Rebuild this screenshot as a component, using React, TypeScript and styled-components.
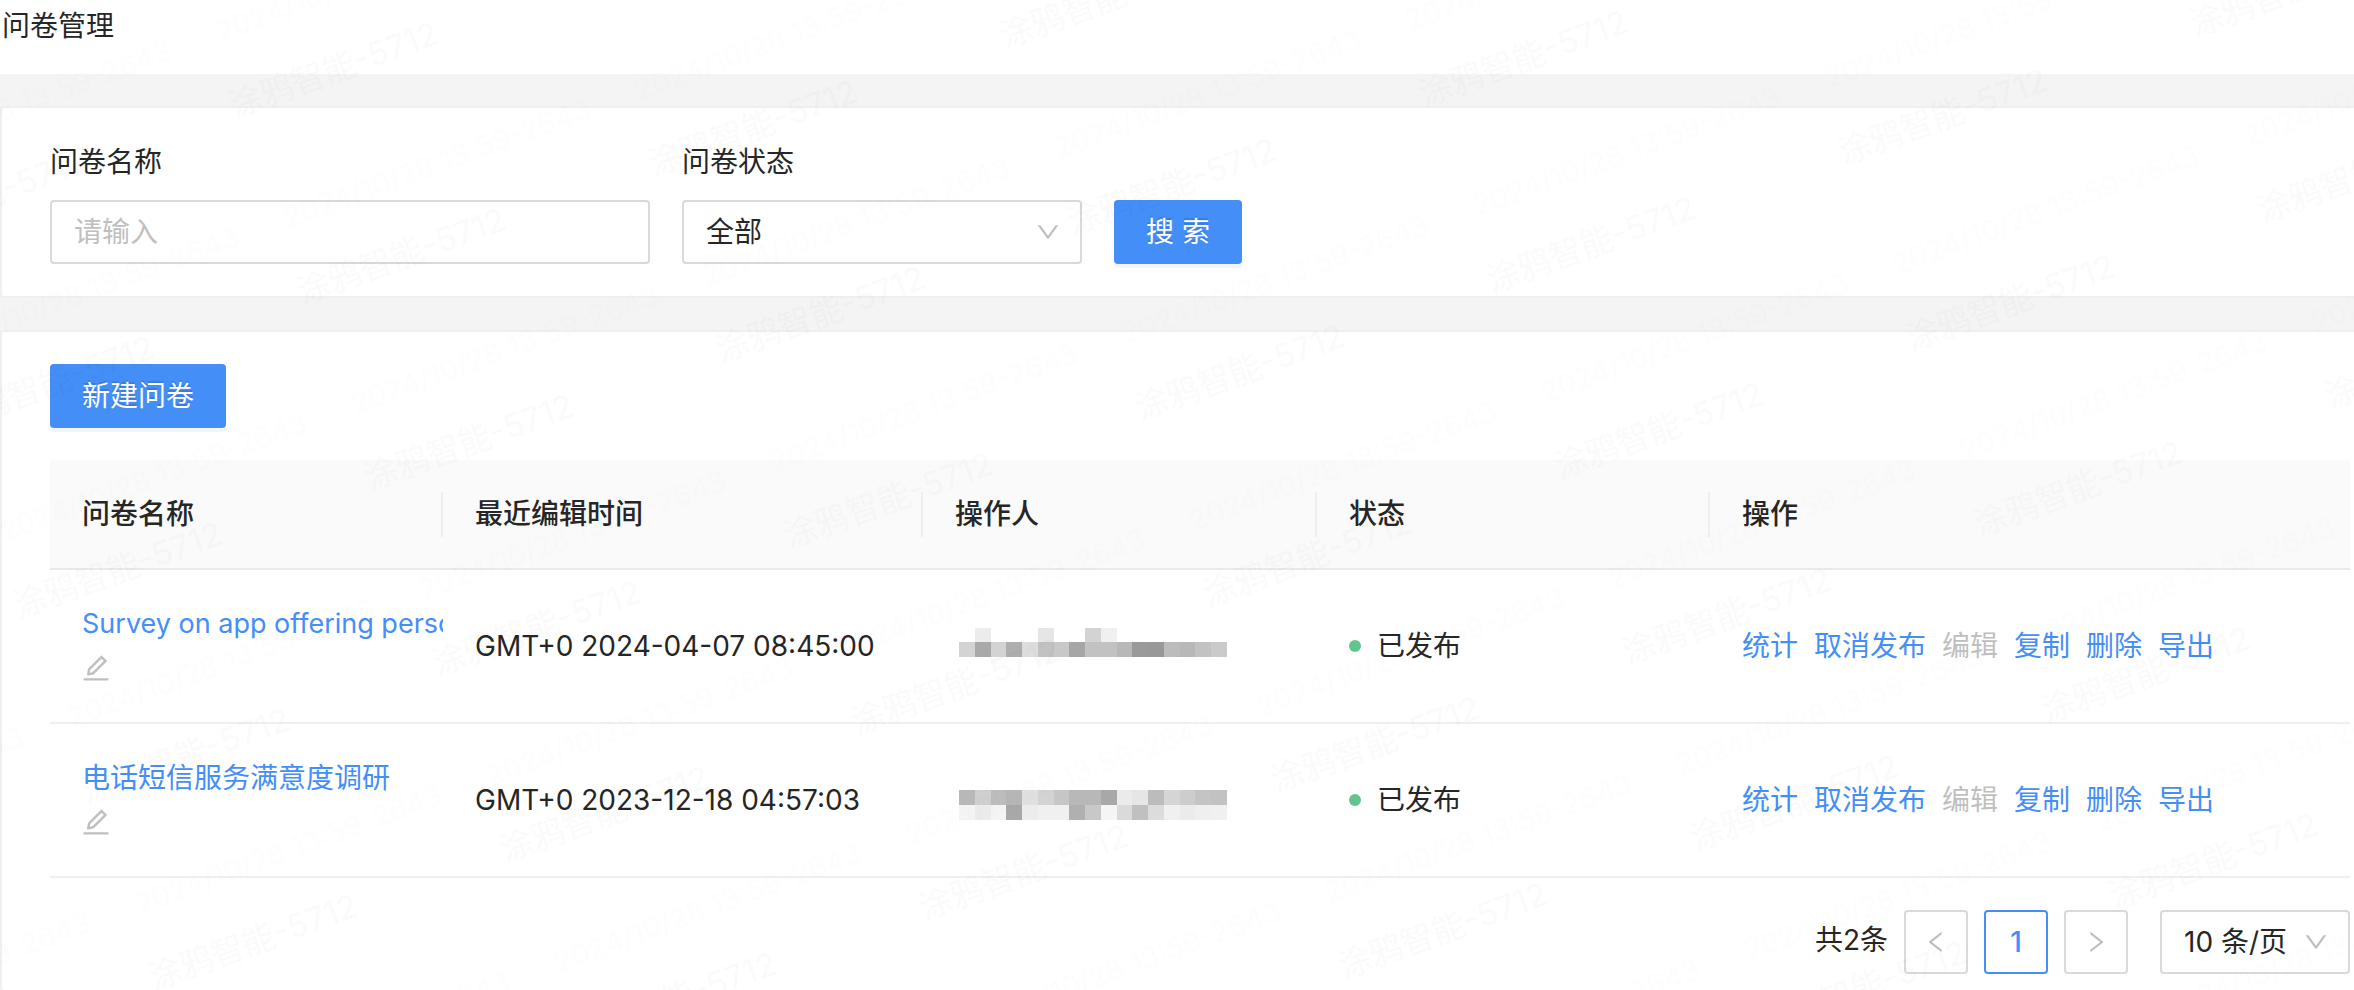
import React from 'react';
import styled, { createGlobalStyle } from 'styled-components';

const Global = createGlobalStyle`
  *, *::before, *::after { box-sizing: border-box; }
  body {
    margin: 0;
    background: #f4f4f4;
    color: #262626;
    font: 28px/44px Inter, 'Noto Sans CJK SC', sans-serif;
  }
  button, input, select { font: inherit; color: inherit; }
`;

const Page = styled.div`
  position: relative;
  overflow: hidden;
  min-height: 100vh;
  display: flex;
  flex-direction: column;
`;

const PageHeader = styled.header`
  height: 74px;
  padding: 4px 2px;
  background: #fff;
`;

const Title = styled.h1`
  margin: 0;
  font-size: 28px;
  font-weight: 400;
  line-height: 44px;
`;

const Main = styled.main`
  flex: 1;
  display: flex;
  flex-direction: column;
  gap: 32px;
  padding-top: 32px;
`;

const Card = styled.section<{ $grow?: boolean }>`
  flex: ${(p) => (p.$grow ? 1 : 'none')};
  padding: 32px 4px ${(p) => (p.$grow ? 16 : 32)}px 48px;
  background: #fff;
  border: 2px solid #efefef;
  border-right: 0;
  border-bottom-width: ${(p) => (p.$grow ? 0 : 2)}px;
  border-radius: 4px 0 0 4px;
`;

const SearchForm = styled.form`
  display: flex;
  align-items: flex-end;
  gap: 32px;
`;

const Field = styled.div<{ $width: number }>`
  display: flex;
  flex-direction: column;
  gap: 16px;
  width: ${(p) => p.$width}px;
`;

const TextInput = styled.input`
  width: 100%;
  height: 64px;
  padding: 0 22px;
  background: #fff;
  border: 2px solid #d9d9d9;
  border-radius: 4px;
  outline: none;
  &::placeholder { color: #bfbfbf; opacity: 1; }
`;

const SelectBox = styled.div`
  position: relative;
  display: flex;
`;

const SelectInput = styled.select<{ $compact?: boolean }>`
  appearance: none;
  width: ${(p) => (p.$compact ? '190px' : '100%')};
  height: 64px;
  padding: 0 22px;
  background: #fff;
  border: 2px solid #d9d9d9;
  border-radius: 4px;
  outline: none;
`;

const SelectArrow = styled.svg`
  position: absolute;
  top: 20px;
  right: 22px;
  width: 24px;
  height: 24px;
  fill: #bfbfbf;
  pointer-events: none;
`;

const PrimaryButton = styled.button`
  height: 64px;
  padding: 0 32px;
  color: #fff;
  background: #448ef7;
  border: 0;
  border-radius: 4px;
  box-shadow: 0 4px 0 rgba(0, 0, 0, 0.045);
  text-shadow: 0 -2px 0 rgba(0, 0, 0, 0.12);
  white-space: pre;
`;

const Table = styled.table`
  width: 100%;
  margin-top: 32px;
  table-layout: fixed;
  border-collapse: separate;
  border-spacing: 0;
`;

const HeadCell = styled.th`
  position: relative;
  height: 110px;
  padding: 0 32px;
  text-align: left;
  font-weight: 500;
  background: #fafafa;
  border-bottom: 2px solid #e9e9e9;
  &:first-child { border-top-left-radius: 4px; }
  &:last-child { border-top-right-radius: 4px; }
  &:not(:last-child)::after {
    content: '';
    position: absolute;
    top: 32px;
    right: 0;
    width: 2px;
    height: 45px;
    background: #efefef;
  }
`;

const Cell = styled.td<{ $flush?: boolean }>`
  height: 154px;
  padding: 0 ${(p) => (p.$flush ? 0 : 32)}px 0 32px;
  border-bottom: 2px solid #efefef;
  white-space: nowrap;
`;

const NameLink = styled.a<{ $latin?: boolean }>`
  display: block;
  overflow: hidden;
  color: #448ef7;
  font-size: ${(p) => (p.$latin ? 27 : 28)}px;
  text-decoration: none;
`;

const EditButton = styled.button`
  display: block;
  width: 28px;
  height: 44px;
  padding: 8px 0;
  background: none;
  border: 0;
  svg { display: block; width: 28px; height: 28px; fill: #bfbfbf; }
`;

const Status = styled.span`
  display: flex;
  align-items: center;
  gap: 16px;
  &::before {
    content: '';
    width: 12px;
    height: 12px;
    border-radius: 50%;
    background: #62c48f;
  }
`;

const Actions = styled.div`
  display: flex;
  gap: 16px;
`;

const Action = styled.a`
  color: #448ef7;
  text-decoration: none;
  &[aria-disabled='true'] { color: #bfbfbf; }
`;

const Mosaic = styled.svg`
  display: block;
  margin-left: 4px;
`;

const Pagination = styled.nav`
  display: flex;
  justify-content: flex-end;
  gap: 16px;
  margin-top: 32px;
`;

const Total = styled.span`
  line-height: 60px;
`;

const PageButton = styled.button<{ $active?: boolean }>`
  display: flex;
  align-items: center;
  justify-content: center;
  width: 64px;
  height: 64px;
  padding: 0;
  background: #fff;
  border: 2px solid ${(p) => (p.$active ? '#448ef7' : '#d9d9d9')};
  border-radius: 4px;
  color: ${(p) => (p.$active ? '#448ef7' : '#bfbfbf')};
  font-weight: ${(p) => (p.$active ? 500 : 400)};
  svg { width: 24px; height: 24px; fill: currentColor; }
`;

const PageSize = styled.div`
  margin-left: 16px;
`;

const Watermark = styled.svg`
  position: absolute;
  inset: 0;
  width: 100%;
  height: 100%;
  pointer-events: none;
`;

const DownIcon = () => (
  <SelectArrow viewBox="64 64 896 896" aria-hidden="true">
    <path d="M884 256h-75c-5.100 0-9.900 2.500-12.900 6.600L512 654.200 227.900 262.600c-3-4.100-7.800-6.600-12.900-6.600h-75c-6.500 0-10.300 7.400-6.500 12.700l352.600 486.100c12.800 17.600 39 17.600 51.700 0l352.600-486.100c3.900-5.300.1-12.700-6.400-12.700z" />
  </SelectArrow>
);

const EditIcon = () => (
  <svg viewBox="64 64 896 896" aria-hidden="true">
    <path d="M257.700 752c2 0 4-.2 6-.5L431.900 722c2-.4 3.900-1.300 5.300-2.800l423.900-423.900a9.960 9.960 0 000-14.100L694.900 114.900c-1.900-1.900-4.400-2.900-7.100-2.900s-5.200 1-7.100 2.900L256.800 538.800c-1.500 1.500-2.400 3.300-2.800 5.300l-29.500 168.200a33.500 33.500 0 009.400 29.800c6.600 6.400 14.900 9.900 23.800 9.900zm67.400-174.400L687.800 215l73.300 73.300-362.700 362.600-88.900 15.700 15.600-89zM880 836H144c-17.700 0-32 14.300-32 32v36c0 4.400 3.600 8 8 8h784c4.400 0 8-3.600 8-8v-36c0-17.700-14.300-32-32-32z" />
  </svg>
);

const LeftIcon = () => (
  <svg viewBox="64 64 896 896" aria-hidden="true">
    <path d="M724 218.300V141c0-6.700-7.700-10.400-12.900-6.300L260.300 486.800a31.860 31.860 0 000 50.300l450.800 352.100c5.300 4.100 12.900.4 12.900-6.300v-77.300c0-4.900-2.300-9.600-6.100-12.600l-360-281 360-281.100c3.800-3 6.100-7.700 6.100-12.600z" />
  </svg>
);

const RightIcon = () => (
  <svg viewBox="64 64 896 896" aria-hidden="true">
    <path d="M765.700 486.800L314.900 134.700A7.970 7.970 0 00302 141v77.300c0 4.900 2.300 9.600 6.100 12.600l360 281.100-360 281.100c-3.900 3-6.100 7.700-6.100 12.600V883c0 6.700 7.700 10.400 12.900 6.300l450.800-352.100a31.960 31.960 0 000-50.400z" />
  </svg>
);

/* Grey levels of the masked operator names, one array per line of blocks. */
type MaskRow = { height: number; levels: number[] };

const OperatorMask = ({ rows }: { rows: MaskRow[] }) => {
  const total = rows.reduce((sum, r) => sum + r.height, 0);
  let y = 0;
  return (
    <Mosaic width="268" height={total} viewBox={`0 0 17 ${total}`} preserveAspectRatio="none" shapeRendering="crispEdges" aria-hidden="true">
      {rows.map((row, i) => {
        const top = y;
        y += row.height;
        return row.levels.map((v, x) => (
          <rect key={`${i}-${x}`} x={x} y={top} width="1" height={row.height} fill={`rgb(${v},${v},${v})`} />
        ));
      })}
    </Mosaic>
  );
};

const surveys = [
  {
    name: 'Survey on app offering personalized services',
    latin: true,
    time: 'GMT+0 2024-04-07 08:45:00',
    mask: [
      { height: 14, levels: [255, 236, 255, 255, 255, 230, 255, 255, 211, 240, 255, 255, 255, 255, 255, 255, 255] },
      { height: 15, levels: [211, 169, 211, 174, 221, 194, 200, 166, 194, 194, 184, 154, 152, 188, 184, 194, 202] },
      { height: 7, levels: [255, 255, 252, 255, 255, 253, 255, 255, 255, 255, 255, 255, 255, 255, 255, 255, 255] },
    ],
  },
  {
    name: '电话短信服务满意度调研',
    latin: false,
    time: 'GMT+0 2023-12-18 04:57:03',
    mask: [
      { height: 10, levels: [] },
      { height: 15, levels: [184, 207, 188, 182, 224, 211, 198, 184, 184, 168, 235, 230, 188, 213, 205, 196, 194] },
      { height: 15, levels: [244, 235, 244, 168, 236, 240, 240, 176, 200, 245, 218, 192, 220, 240, 235, 239, 240] },
    ],
  },
];

export default function App() {
  return (
    <Page>
      <Global />
      <PageHeader>
        <Title>问卷管理</Title>
      </PageHeader>
      <Main>
        <Card>
          <SearchForm onSubmit={(e) => e.preventDefault()}>
            <Field $width={600}>
              <label htmlFor="name">问卷名称</label>
              <TextInput id="name" placeholder="请输入" />
            </Field>
            <Field $width={400}>
              <label htmlFor="status">问卷状态</label>
              <SelectBox>
                <SelectInput id="status">
                  <option>全部</option>
                </SelectInput>
                <DownIcon />
              </SelectBox>
            </Field>
            <PrimaryButton type="submit">搜 索</PrimaryButton>
          </SearchForm>
        </Card>
        <Card $grow>
          <PrimaryButton type="button">新建问卷</PrimaryButton>
          <Table>
            <colgroup>
              <col width="393" />
              <col width="480" />
              <col width="394" />
              <col width="393" />
              <col />
            </colgroup>
            <thead>
              <tr>
                <HeadCell>问卷名称</HeadCell>
                <HeadCell>最近编辑时间</HeadCell>
                <HeadCell>操作人</HeadCell>
                <HeadCell>状态</HeadCell>
                <HeadCell>操作</HeadCell>
              </tr>
            </thead>
            <tbody>
              {surveys.map((s) => (
                <tr key={s.name}>
                  <Cell $flush>
                    <NameLink href="#" $latin={s.latin}>{s.name}</NameLink>
                    <EditButton type="button" aria-label="编辑名称">
                      <EditIcon />
                    </EditButton>
                  </Cell>
                  <Cell>
                    <time>{s.time}</time>
                  </Cell>
                  <Cell>
                    <OperatorMask rows={s.mask} />
                  </Cell>
                  <Cell>
                    <Status>已发布</Status>
                  </Cell>
                  <Cell>
                    <Actions>
                      <Action href="#">统计</Action>
                      <Action href="#">取消发布</Action>
                      <Action aria-disabled="true">编辑</Action>
                      <Action href="#">复制</Action>
                      <Action href="#">删除</Action>
                      <Action href="#">导出</Action>
                    </Actions>
                  </Cell>
                </tr>
              ))}
            </tbody>
          </Table>
          <Pagination aria-label="分页">
            <Total>共2条</Total>
            <PageButton type="button" aria-label="上一页" disabled>
              <LeftIcon />
            </PageButton>
            <PageButton type="button" $active>1</PageButton>
            <PageButton type="button" aria-label="下一页" disabled>
              <RightIcon />
            </PageButton>
            <PageSize>
              <SelectBox>
                <SelectInput $compact aria-label="每页条数">
                  <option>10 条/页</option>
                </SelectInput>
                <DownIcon />
              </SelectBox>
            </PageSize>
          </Pagination>
        </Card>
      </Main>
      <Watermark aria-hidden="true">
        <defs>
          <pattern id="mark" width="374" height="198" patternUnits="userSpaceOnUse" patternTransform="translate(220 87) rotate(-20)">
            <text x="3" y="34" fontSize="33" fill="#000" fillOpacity="0.018">涂鸦智能-5712</text>
            <text x="15" y="156" fontSize="29" fill="#000" fillOpacity="0.008">2024/10/28 13:59-2643</text>
          </pattern>
        </defs>
        <rect width="100%" height="100%" fill="url(#mark)" />
      </Watermark>
    </Page>
  );
}
